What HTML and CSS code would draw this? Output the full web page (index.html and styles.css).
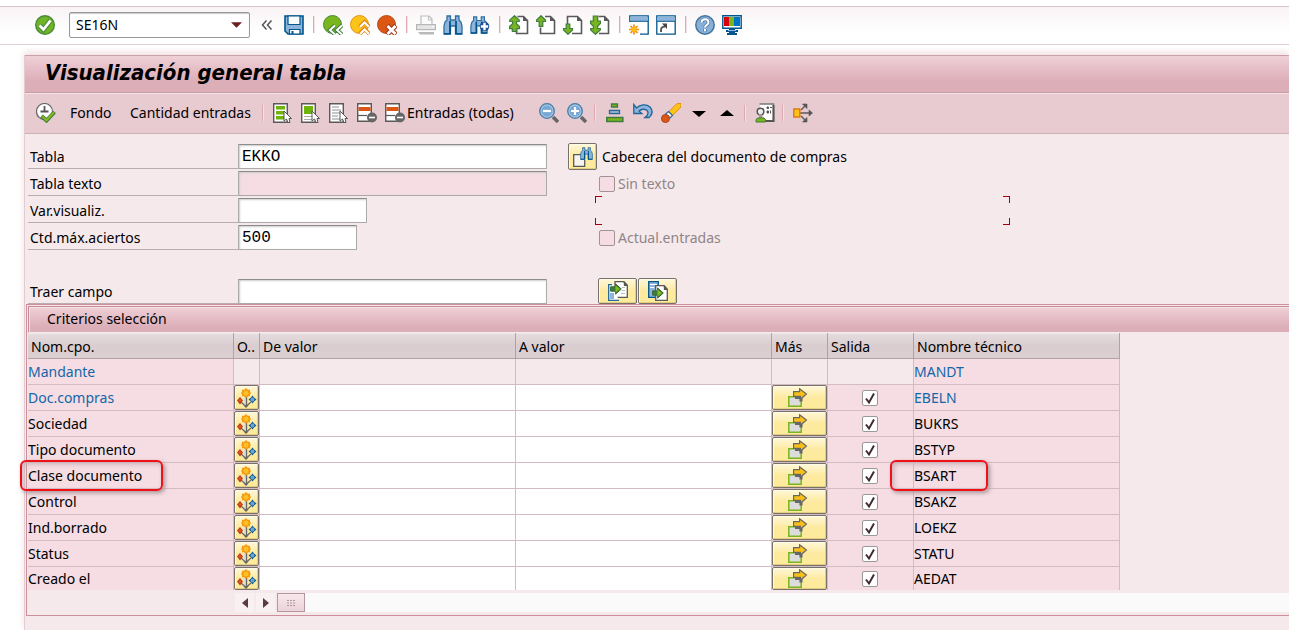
FILE: index.html
```html
<!DOCTYPE html>
<html lang="es">
<head>
<meta charset="utf-8">
<title>Visualización general tabla</title>
<link rel="stylesheet" href="styles.css">
</head>
<body>
<svg class="sprite" aria-hidden="true">
  <symbol id="ok" viewBox="0 0 20 20"><circle cx="10" cy="10" r="9.3" fill="#6fb525" stroke="#4b8a3a" stroke-width="1.4"/><path d="M4.5 10.5l4 4 7-9" fill="none" stroke="#4b8a3a" stroke-width="5"/><path d="M4.500 10.500l4 4 7-9" fill="none" stroke="#fff" stroke-width="2.8"/></symbol>
  <symbol id="save" viewBox="0 0 20 20"><path d="M1 1h18v18H4l-3-3z" fill="#8fb4dc" stroke="#00568c" stroke-width="1.600"/><path d="M4 1h12v8.500H4z" fill="#f8fafc" stroke="#00568c" stroke-width="1.200"/><path d="M5.500 14.500h10.500V19H5.500z" fill="#fff" stroke="#00568c" stroke-width="1.200"/><path d="M7.500 16h2v3h-2z" fill="#00568c"/></symbol>
  <symbol id="back" viewBox="0 0 20 20"><circle cx="9.500" cy="9.500" r="9" fill="#79b51c" stroke="#4b8a3a"/><path d="M12 10.500l-5 4.500 5 4.500M19 10.500l-5 4.500 5 4.500" fill="none" stroke="#3f7c3f" stroke-width="4"/><path d="M12 10.500l-5 4.500 5 4.500M19 10.500l-5 4.500 5 4.500" fill="none" stroke="#fff" stroke-width="2"/></symbol>
  <symbol id="exit" viewBox="0 0 20 20"><circle cx="9.500" cy="9.500" r="9" fill="#fcc419" stroke="#e69217"/><path d="M9.500 12l5-5 5 5M9.500 19l5-5 5 5" fill="none" stroke="#e58a15" stroke-width="4"/><path d="M10 12l4.500-4.500L19 12M10 19l4.500-4.500L19 19" fill="none" stroke="#fff" stroke-width="2"/></symbol>
  <symbol id="cancel" viewBox="0 0 20 20"><circle cx="9.500" cy="9.500" r="9" fill="#dc5614" stroke="#b94a1e"/><path d="M10 10.500l9 9M19 10.500l-9 9" stroke="#a83a1c" stroke-width="5"/><path d="M10.500 11l8 8M18.500 11l-8 8" stroke="#fff" stroke-width="2.800"/></symbol>
  <symbol id="print" viewBox="0 0 20 20"><path d="M5 11V1h8l3 3v7" fill="#fafafa" stroke="#bdbdbd" stroke-width="1.200"/><path d="M12.500 1v4H16" fill="none" stroke="#bdbdbd"/><rect x=".6" y="9.600" width="18.800" height="5" fill="#e5e5e5" stroke="#b7b7b7" stroke-width="1.200"/><path d="M16 11h2v1h-2z" fill="#fff"/><path d="M2 17h16v2.500H4z" fill="#b9b9b9"/></symbol>
  <symbol id="find" viewBox="0 0 20 20"><path d="M4 1h3.500v4h5V1H16v4l2 2 1 4v8h-6.500v-8h-5v8H1v-8l1-4 2-2z" fill="#8fb4dc" stroke="#2c6f9f" stroke-width="1.300"/><path d="M7 6v13M13 6v13" stroke="#00568c" stroke-width="1.800"/><path d="M1 18.800h6.500M12.500 18.800H19" stroke="#00568c" stroke-width="1.600"/></symbol>
  <symbol id="findnext" viewBox="0 0 20 20"><use href="#find" width="18" height="20"/><circle cx="14.500" cy="11.500" r="4.800" fill="#1e4f92"/><path d="M10.800 11.500h7.400M14.500 7.800v7.400" stroke="#fff" stroke-width="2.400"/></symbol>
  <symbol id="first" viewBox="0 0 20 20"><path d="M8.500 1.500h6l4 4v13H7.500v-3" fill="#fff" stroke="#595959" stroke-width="1.600"/><path d="M14 1v5h5z" fill="#595959"/><path d="M5.500.7l4.700 4.200v1.600H7.500v2.200l3 2.800v2.200H7.800v2.600H3.300v-2.600H.6v-2.200l3-2.800V6.500H.8V4.900z" fill="#78b422" stroke="#3f7c3f" stroke-width="1.200"/></symbol>
  <symbol id="prev" viewBox="0 0 20 20"><path d="M9 1.500h5.500l4 4v13h-14v-6" fill="#fff" stroke="#595959" stroke-width="1.600"/><path d="M14 1v5h5z" fill="#595959"/><path d="M5 .7l4.500 4.300v1.500H6.800v4.800H3.200V6.500H.5V5z" fill="#78b422" stroke="#3f7c3f" stroke-width="1.200"/></symbol>
  <symbol id="next" viewBox="0 0 20 20"><path d="M4.500 9V1.500h10l4 4v13H9" fill="#fff" stroke="#595959" stroke-width="1.600"/><path d="M14 1v5h5z" fill="#595959"/><path d="M5 19.300L.5 15v-1.500h2.700V9h3.600v4.500h2.700V15z" fill="#78b422" stroke="#3f7c3f" stroke-width="1.200"/></symbol>
  <symbol id="last" viewBox="0 0 20 20"><path d="M8.500 1.500h6l4 4v13H9" fill="#fff" stroke="#595959" stroke-width="1.600"/><path d="M14 1v5h5z" fill="#595959"/><path d="M5.500 19.300L.7 15v-1.500h2.700v-2.200L.6 8.500V6h2.700V1h4.400v5h2.700v2.500l-2.800 2.800v2.200h2.700V15z" fill="#78b422" stroke="#3f7c3f" stroke-width="1.200"/></symbol>
  <symbol id="newwin" viewBox="0 0 20 20"><path d="M.8 7V.800h18.400v18.400H11" fill="#fff" stroke="#00568c" stroke-width="1.300"/><path d="M1.500 1.500h17V6h-17z" fill="#8fb4dc"/><path d="M1 6.300h18" stroke="#00568c"/><path d="M5 9.500v10M0 14.500h10M1.500 11l7 7M8.500 11l-7 7" stroke="#f28b12" stroke-width="1.700"/><circle cx="5" cy="14.500" r="2.600" fill="#fdb913"/></symbol>
  <symbol id="shortcut" viewBox="0 0 20 20"><path d="M.8.800h18.400v18.400H.800z" fill="#fff" stroke="#00568c" stroke-width="1.300"/><path d="M1.500 1.500h17V6h-17z" fill="#8fb4dc"/><path d="M1 6.300h18" stroke="#00568c"/><path d="M5 17c-.5-4 1-5.500 4-5.500" fill="none" stroke="#555" stroke-width="2"/><path d="M6 8.500h5V14z" fill="#444"/></symbol>
  <symbol id="help" viewBox="0 0 20 20"><circle cx="10" cy="10" r="9.200" fill="#88b0d8" stroke="#44759d" stroke-width="1.500"/><path d="M6.500 7.500c.3-4.300 7-4.300 7 0 0 2.500-3.500 2.300-3.500 5M10 14v2.500" fill="none" stroke="#4c7fab" stroke-width="3.600"/><path d="M6.500 7.500c.3-4.300 7-4.300 7 0 0 2.500-3.500 2.300-3.500 5M10 14v2.200" fill="none" stroke="#fff" stroke-width="2"/></symbol>
  <symbol id="layout" viewBox="0 0 20 20"><path d="M.8.800h18.400v12.400H.800z" fill="#fff" stroke="#00568c" stroke-width="1.400"/><path d="M2 2h5v9H2z" fill="#d8000c"/><path d="M7 2h5v9H7z" fill="#7ab51d"/><path d="M12 2h6v9h-6z" fill="#0073c6"/><path d="M7 13h6v5H7zM5 18h10v2H5zM4 15h12v2H4z" fill="#00568c"/><path d="M6 15h8v1H6z" fill="#8fb4dc"/></symbol>
  <symbol id="exec" viewBox="0 0 20 20"><circle cx="8.500" cy="8.500" r="8" fill="#fff" stroke="#666" stroke-width="1.200"/><path d="M8.500 3v6M4.500 8.500h8" stroke="#555" stroke-width="1.800"/><path d="M5.500 13l5 4.500 8-8.500" fill="none" stroke="#3f7c3f" stroke-width="4"/><path d="M6 13.300l4.500 4 7.500-8" fill="none" stroke="#84ba22" stroke-width="2"/></symbol>
  <symbol id="cursor" viewBox="0 0 9 13"><path d="M1 1v10l2.500-2 1.500 3.500h2L6 8.500h2.500z" fill="#fff" stroke="#555"/></symbol>
  <symbol id="selall" viewBox="0 0 20 20"><path d="M.7.700h13.600v18.600H.700z" fill="#fff" stroke="#595959" stroke-width="1.400"/><path d="M3 3h9v3.500H3zM3 8h9v3.500H3zM3 13h9v3.500H3z" fill="#6fb40d"/><use href="#cursor" x="10" y="7" width="9" height="13"/></symbol>
  <symbol id="selblock" viewBox="0 0 20 20"><path d="M.7.700h13.600v18.600H.700z" fill="#fff" stroke="#595959" stroke-width="1.400"/><path d="M3 3h9v8H3z" fill="#6fb40d"/><path d="M3 13.500h9M3 16.500h9" stroke="#aaa"/><use href="#cursor" x="10" y="7" width="9" height="13"/></symbol>
  <symbol id="selnone" viewBox="0 0 20 20"><path d="M.7.700h13.600v18.600H.700z" fill="#fff" stroke="#595959" stroke-width="1.400"/><path d="M3 4h7M3 7h9M3 10h8M3 13h6M3 16h8" stroke="#b5b5b5" stroke-width="1.400"/><use href="#cursor" x="10" y="7" width="9" height="13"/></symbol>
  <symbol id="delrow" viewBox="0 0 20 20"><path d="M.7.700h13.600v17.600H.700z" fill="#fff" stroke="#595959" stroke-width="1.400"/><path d="M1.500 4h12v4h-12z" fill="#dc5614"/><path d="M1 12.500h9" stroke="#595959" stroke-width="1.200"/><circle cx="15" cy="14.500" r="5" fill="#666"/><path d="M12 14.500h6" stroke="#fff" stroke-width="1.600"/></symbol>
  <symbol id="lens" viewBox="0 0 20 20"><path d="M14 14l5 5" stroke="#666" stroke-width="3.500"/><circle cx="8" cy="8" r="7.300" fill="#a9c8e6" stroke="#447ba4" stroke-width="1.300"/><circle cx="8" cy="8" r="5.500" fill="#78a8d4"/></symbol>
  <symbol id="zoomout" viewBox="0 0 20 20"><use href="#lens"/><path d="M4 8h8" stroke="#fff" stroke-width="2.200"/></symbol>
  <symbol id="zoomin" viewBox="0 0 20 20"><use href="#lens"/><path d="M4 8h8M8 4v8" stroke="#fff" stroke-width="2.200"/></symbol>
  <symbol id="levels" viewBox="0 0 20 20"><path d="M6.500 1h6v3h-6z" fill="#7ab51d" stroke="#3f7c3f" stroke-width="1.300"/><path d="M4.500 7.500h10v3h-10z" fill="#a8c6e4" stroke="#2c6791" stroke-width="1.300"/><path d="M1.800 14.500h16v4h-16z" fill="#7ab51d" stroke="#3f7c3f" stroke-width="1.600"/></symbol>
  <symbol id="undo" viewBox="0 0 20 20"><path d="M.8 1.500v9h8L6 8c3-3 9-2 9 2 0 2-1 3-3 4.500h4c3.500-3 4-7 1-10.500C13 .500 7 1.500 3.500 5z" fill="#8fb4dc" stroke="#1d679b" stroke-width="1.300"/></symbol>
  <symbol id="brush" viewBox="0 0 20 20"><path d="M8 8.500L15.500 1 17 .5h3V4l-8.500 8.500z" fill="#fcc419" stroke="#e59011"/><path d="M7.500 8.500l4 4-2.500 2.500-4.500-4z" fill="#fff" stroke="#25699a" stroke-width="1.200"/><circle cx="4.500" cy="15.500" r="4" fill="#dc5614" stroke="#a9441c"/></symbol>
  <symbol id="down" viewBox="0 0 20 20"><path d="M3 8h14l-7 6z"/></symbol>
  <symbol id="up" viewBox="0 0 20 20"><path d="M3 13h14l-7-6z"/></symbol>
  <symbol id="person" viewBox="0 0 20 20"><path d="M4.500 1h14v17H10" fill="#fff" stroke="#777" stroke-width="1.400"/><path d="M18.500 2v16H10" fill="none" stroke="#555" stroke-width="2"/><path d="M12 4h1.500v1.500H12zM15 4.500h2M12 8h1.500v2H12zM15.500 7.500v3" fill="#555" stroke="#555"/><circle cx="5.500" cy="8.500" r="3.300" fill="#eee" stroke="#555" stroke-width="1.500"/><path d="M4 11h3v4H4z" fill="#999"/><path d="M1 19v-2.500L3 15h6l1.500 1.500V19z" fill="#7ab51d" stroke="#3f7c3f"/></symbol>
  <symbol id="split" viewBox="0 0 20 20"><path d="M7 10h9M8 7l4-4M8 13l4 4" stroke="#595959" stroke-width="1.400"/><path d="M16 7l3.500 3-3.500 3zM9.500 1H14v4.500zM9.500 19H14v-4.500z" fill="#555" stroke="#555" stroke-width=".6"/><path d="M.8 6h6v8h-6z" fill="#fcc419" stroke="#e07c10" stroke-width="1.500"/></symbol>
  <symbol id="findpage" viewBox="0 0 20 20"><path d="M8 7.700H.700v11.600h11V13" fill="#f7f4ef" stroke="#595959" stroke-width="1.300"/><use href="#find" x="7" width="13" height="13"/></symbol>
  <symbol id="arrowrt" viewBox="0 0 12 12"><path d="M.6 3.800h5V.900L11.300 6 5.600 11.100V8.200h-5z" fill="#3f7c3f" stroke="#35693a"/><path d="M5.500 4.500V2.500L10 6l-4.500 3.500v-2z" fill="#84bb20"/></symbol>
  <symbol id="getfield" viewBox="0 0 20 20"><path d="M7 .7h9l3.300 3.500v12.100H7z" fill="#fff" stroke="#595959" stroke-width="1.300"/><path d="M14 6.500h3M14 9.500h3M13 12.500h4" stroke="#bbb"/><path d="M11 19.300H.700V3.700H4" fill="#fff" stroke="#1d679b" stroke-width="1.300"/><path d="M2 12h4v6H2z" fill="#8fb4dc"/><path d="M15.500 0L20 5h-4z" fill="#555"/><use href="#arrowrt" x="2" y="2" width="12" height="12"/></symbol>
  <symbol id="putfield" viewBox="0 0 20 20"><path d="M.7.700h9.600v15.600H.700z" fill="#8fb4dc" stroke="#00568c" stroke-width="1.300"/><path d="M2 3.500h7M2 6.500h4" stroke="#fff" stroke-width="1.200"/><path d="M7.700 19.300V4.700h8.600l3 3.500v11.100z" fill="#fff" stroke="#595959" stroke-width="1.300"/><path d="M15.500 4l4.500 5h-4z" fill="#555"/><use href="#arrowrt" x="4" y="6" width="12" height="12"/></symbol>
  <symbol id="options" viewBox="0 0 20 20"><path d="M9 8v9" stroke="#d9d9d9" stroke-width="3.600"/><path d="M9.500 8v10M9 18.500l-5-4.500M9 18.500l5-4.500" stroke="#666" stroke-width="1.200"/><path d="M6.500 17.500h5L9 20z" fill="#666"/><path d="M9 0l1.800 1.800H13v2L14 5l-1 1.200v2h-2.200L9 10 7.200 8.200H5v-2L4 5l1-1.200v-2h2.200z" fill="#f59a12"/><circle cx="9" cy="5" r="2.500" fill="#fdbf24"/><path d="M3 9l3 3.500-3 4-3-4z" fill="#b93a1d"/><circle cx="3" cy="12.500" r="1.500" fill="#dd5620"/><path d="M15.500 7.500l1.500 2 2.500 2-2.500 2-1.500 2-1.500-2-2.500-2 2.500-2z" fill="#0d5b93"/><circle cx="15.500" cy="11.500" r="1.900" fill="#6ba2d0"/></symbol>
  <symbol id="more" viewBox="0 0 20 20"><path d="M.8 8.800h12.400v9.400H.8z" fill="#dcdcdc" stroke="#7ab51d" stroke-width="1.500"/><path d="M7 9.500h6v4" fill="none" stroke="#666" stroke-width="3"/><path d="M5.600 3.600h6V.8L18.400 6l-6 5.300V8.400H5.600z" fill="#fcc014" stroke="#666" stroke-width="1.200"/></symbol>
</svg>

<header class="system">
  <button class="tool" aria-label="Continuar"><svg><use href="#ok"/></svg></button>
  <div class="command">
    <input aria-label="Comando" value="SE16N">
    <button aria-label="Historial"><svg viewBox="0 0 12 6"><path d="M0 0h12L6 6z" fill="#6b1d20"/></svg></button>
  </div>
  <button class="collapse" aria-label="Ocultar campo"><svg viewBox="0 0 12 10"><path d="M5.500 .500L1.500 5l4 4.500M10.500 .500L6.500 5l4 4.500" fill="none" stroke="#555" stroke-width="1.500"/></svg></button>
  <button class="tool" aria-label="Grabar"><svg><use href="#save"/></svg></button>
  <i class="sep"></i>
  <button class="tool" aria-label="Atrás"><svg><use href="#back"/></svg></button>
  <button class="tool" aria-label="Finalizar"><svg><use href="#exit"/></svg></button>
  <button class="tool" aria-label="Cancelar"><svg><use href="#cancel"/></svg></button>
  <i class="sep"></i>
  <button class="tool" aria-label="Imprimir" disabled><svg><use href="#print"/></svg></button>
  <button class="tool" aria-label="Buscar"><svg><use href="#find"/></svg></button>
  <button class="tool" aria-label="Continuar búsqueda"><svg><use href="#findnext"/></svg></button>
  <i class="sep"></i>
  <button class="tool" aria-label="Primera página"><svg><use href="#first"/></svg></button>
  <button class="tool" aria-label="Página anterior"><svg><use href="#prev"/></svg></button>
  <button class="tool" aria-label="Página siguiente"><svg><use href="#next"/></svg></button>
  <button class="tool" aria-label="Última página"><svg><use href="#last"/></svg></button>
  <i class="sep"></i>
  <button class="tool" aria-label="Crear modo"><svg><use href="#newwin"/></svg></button>
  <button class="tool" aria-label="Crear enlace"><svg><use href="#shortcut"/></svg></button>
  <i class="sep"></i>
  <button class="tool" aria-label="Ayuda"><svg><use href="#help"/></svg></button>
  <button class="tool" aria-label="Ajustar disposición local"><svg><use href="#layout"/></svg></button>
</header>

<main class="window">
  <h1>Visualización general tabla</h1>
  <div class="actions">
    <button class="tool" aria-label="Ejecutar"><svg><use href="#exec"/></svg></button>
    <button class="text short">Fondo</button>
    <button class="text long">Cantidad entradas</button>
    <i class="sep"></i>
    <button class="tool" aria-label="Marcar todo"><svg><use href="#selall"/></svg></button>
    <button class="tool" aria-label="Marcar bloque"><svg><use href="#selblock"/></svg></button>
    <button class="tool" aria-label="Desmarcar todo"><svg><use href="#selnone"/></svg></button>
    <button class="tool" aria-label="Borrar entrada"><svg><use href="#delrow"/></svg></button>
    <button class="text entries"><svg><use href="#delrow"/></svg>Entradas (todas)</button>
    <button class="tool" aria-label="Reducir"><svg><use href="#zoomout"/></svg></button>
    <button class="tool" aria-label="Ampliar"><svg><use href="#zoomin"/></svg></button>
    <i class="sep"></i>
    <button class="tool" aria-label="Niveles"><svg><use href="#levels"/></svg></button>
    <button class="tool" aria-label="Deshacer"><svg><use href="#undo"/></svg></button>
    <button class="tool" aria-label="Formato"><svg><use href="#brush"/></svg></button>
    <button class="tool" aria-label="Bajar"><svg><use href="#down"/></svg></button>
    <button class="tool" aria-label="Subir"><svg><use href="#up"/></svg></button>
    <i class="sep"></i>
    <button class="tool" aria-label="Usuario"><svg><use href="#person"/></svg></button>
    <i class="sep"></i>
    <button class="tool" aria-label="Enlaces"><svg><use href="#split"/></svg></button>
  </div>

  <form class="fields">
    <div class="row">
      <label for="tabla">Tabla</label>
      <div class="slot"><input id="tabla" class="wide" value="EKKO"></div>
      <button type="button" class="gold lookup" aria-label="Buscar tabla"><svg><use href="#findpage"/></svg></button>
      <span class="desc">Cabecera del documento de compras</span>
    </div>
    <div class="row">
      <label for="texto">Tabla texto</label>
      <div class="slot"><input id="texto" class="wide" disabled></div>
      <span class="check"><input type="checkbox" id="sin" disabled><label for="sin">Sin texto</label></span>
    </div>
    <div class="row">
      <label for="var">Var.visualiz.</label>
      <div class="slot"><input id="var" class="variant"></div>
      <div class="frame"></div>
    </div>
    <div class="row">
      <label for="max">Ctd.máx.aciertos</label>
      <div class="slot"><input id="max" class="hits" value="500"></div>
      <span class="check"><input type="checkbox" id="act" disabled><label for="act">Actual.entradas</label></span>
    </div>
    <div class="row fetch">
      <label for="traer">Traer campo</label>
      <div class="slot"><input id="traer" class="wide"></div>
      <div class="pair">
        <button type="button" class="gold" aria-label="Traer"><svg><use href="#getfield"/></svg></button>
        <button type="button" class="gold" aria-label="Pasar"><svg><use href="#putfield"/></svg></button>
      </div>
    </div>
  </form>

  <section class="criteria">
    <h2>Criterios selección</h2>
    <table>
      <colgroup><col class="c-name"><col class="c-opt"><col class="c-val"><col class="c-val"><col class="c-more"><col class="c-out"><col class="c-name"></colgroup>
      <thead><tr><th>Nom.cpo.</th><th>O..</th><th>De valor</th><th>A valor</th><th>Más</th><th>Salida</th><th>Nombre técnico</th></tr></thead>
      <tbody>
        <tr class="key locked"><td>Mandante</td><td></td><td></td><td></td><td></td><td></td><td>MANDT</td></tr>
        <tr class="key"><td>Doc.compras</td><td><button class="gold" aria-label="Opción"><svg><use href="#options"/></svg></button></td><td><input aria-label="De valor"></td><td><input aria-label="A valor"></td><td><button class="gold more" aria-label="Más"><svg><use href="#more"/></svg></button></td><td><input type="checkbox" aria-label="Salida" checked></td><td>EBELN</td></tr>
        <tr><td>Sociedad</td><td><button class="gold" aria-label="Opción"><svg><use href="#options"/></svg></button></td><td><input aria-label="De valor"></td><td><input aria-label="A valor"></td><td><button class="gold more" aria-label="Más"><svg><use href="#more"/></svg></button></td><td><input type="checkbox" aria-label="Salida" checked></td><td>BUKRS</td></tr>
        <tr><td>Tipo documento</td><td><button class="gold" aria-label="Opción"><svg><use href="#options"/></svg></button></td><td><input aria-label="De valor"></td><td><input aria-label="A valor"></td><td><button class="gold more" aria-label="Más"><svg><use href="#more"/></svg></button></td><td><input type="checkbox" aria-label="Salida" checked></td><td>BSTYP</td></tr>
        <tr><td>Clase documento<i class="mark name"></i></td><td><button class="gold" aria-label="Opción"><svg><use href="#options"/></svg></button></td><td><input aria-label="De valor"></td><td><input aria-label="A valor"></td><td><button class="gold more" aria-label="Más"><svg><use href="#more"/></svg></button></td><td><input type="checkbox" aria-label="Salida" checked></td><td>BSART<i class="mark tech"></i></td></tr>
        <tr><td>Control</td><td><button class="gold" aria-label="Opción"><svg><use href="#options"/></svg></button></td><td><input aria-label="De valor"></td><td><input aria-label="A valor"></td><td><button class="gold more" aria-label="Más"><svg><use href="#more"/></svg></button></td><td><input type="checkbox" aria-label="Salida" checked></td><td>BSAKZ</td></tr>
        <tr><td>Ind.borrado</td><td><button class="gold" aria-label="Opción"><svg><use href="#options"/></svg></button></td><td><input aria-label="De valor"></td><td><input aria-label="A valor"></td><td><button class="gold more" aria-label="Más"><svg><use href="#more"/></svg></button></td><td><input type="checkbox" aria-label="Salida" checked></td><td>LOEKZ</td></tr>
        <tr><td>Status</td><td><button class="gold" aria-label="Opción"><svg><use href="#options"/></svg></button></td><td><input aria-label="De valor"></td><td><input aria-label="A valor"></td><td><button class="gold more" aria-label="Más"><svg><use href="#more"/></svg></button></td><td><input type="checkbox" aria-label="Salida" checked></td><td>STATU</td></tr>
        <tr class="final"><td>Creado el</td><td><button class="gold" aria-label="Opción"><svg><use href="#options"/></svg></button></td><td><input aria-label="De valor"></td><td><input aria-label="A valor"></td><td><button class="gold more" aria-label="Más"><svg><use href="#more"/></svg></button></td><td><input type="checkbox" aria-label="Salida" checked></td><td>AEDAT</td></tr>
      </tbody>
    </table>
    <div class="scroll">
      <button class="step" aria-label="Izquierda"><svg viewBox="0 0 6 10"><path d="M6 0v10L0 5z" fill="#5b3a42"/></svg></button>
      <button class="step" aria-label="Derecha"><svg viewBox="0 0 6 10"><path d="M0 0v10l6-5z" fill="#5b3a42"/></svg></button>
      <div class="track"><div class="thumb"><svg viewBox="0 0 8 6"><path d="M0 .5h8M0 3h8M0 5.500h8" stroke="#b0989e" stroke-dasharray="2 1"/></svg></div></div>
    </div>
  </section>
</main>
</body>
</html>
```
FILE: styles.css
```css
* { box-sizing: border-box; }

body {
  margin: 0;
  min-height: 100vh;
  display: flex;
  flex-direction: column;
  background: #fff;
  color: #000;
  font: 14px/20px "Noto Sans", "Open Sans", sans-serif;
  overflow-x: hidden;
}

.sprite { position: absolute; width: 0; height: 0; }
svg { display: block; flex: none; }
button { font: inherit; color: inherit; padding: 0; border: 0; background: none; display: flex; align-items: center; }
input { font: inherit; margin: 0; }

/* System toolbar */
.system {
  display: flex;
  align-items: center;
  gap: 7px;
  height: 39px;
  margin-top: 6px;
  padding: 0 0 2px 35px;
  border-top: 1px solid #d6c6c9;
  border-bottom: 1px solid #e0d0d3;
  background: linear-gradient(#f9f3f4, #fff 70%);
}
.tool, .tool svg { width: 20px; height: 20px; }
.sep { width: 2px; height: 17px; margin: 0 1px 0 2px; background: linear-gradient(90deg, #dfa9b3 50%, #f3e2e5 50%); }
.command {
  display: flex;
  align-items: center;
  width: 181px;
  height: 26px;
  margin: 0 4px 0 7px;
  padding-right: 7px;
  border: 1px solid #999;
  border-radius: 2px;
  background: #fff;
  box-shadow: inset 0 1px 1px #ccc;
}
.command input { flex: 1; min-width: 0; padding: 0 6px; border: 0; background: none; outline: 0; }
.command svg { width: 11px; height: 6px; }
.collapse { margin-right: 4px; }
.collapse svg { width: 12px; height: 10px; }

/* Window */
.window {
  flex: 1;
  margin: 10px 0 0 24px;
  border-left: 1px solid #e2ccd1;
  background: #f6e9eb;
  box-shadow: 0 -3px 7px #f1dfe2;
}
h1 {
  margin: 0;
  height: 38px;
  padding-left: 20px;
  border-top: 1px solid #c9a0a8;
  border-bottom: 1px solid #c49ca4;
  background: linear-gradient(#efd0d7, #dcaeb8 70%, #dcaeb8);
  font: italic bold 22px/34px "DejaVu Sans Condensed", "DejaVu Sans", sans-serif;
}
.actions {
  display: flex;
  align-items: center;
  gap: 8px;
  height: 41px;
  padding: 0 0 1px 11px;
  border-top: 1px solid #f6e4e8;
  border-bottom: 1px solid #cdb0b6;
  background: #e8cad1;
}
.actions .text { height: 22px; white-space: nowrap; }
.actions .sep { margin: 0 1px 0 -1px; height: 16px; }
.actions .short { width: 45px; margin-left: 6px; }
.actions .long { width: 125px; margin-left: 7px; }
.actions .entries { width: 146px; gap: 2px; }
.entries svg { width: 20px; height: 20px; }

/* Form */
.fields { padding: 10px 0 0 3px; }
.row { display: flex; align-items: flex-end; height: 25px; margin-bottom: 2px; white-space: nowrap; }
.row > label { width: 210px; height: 25px; padding-left: 2px; line-height: 25px; border-bottom: 1px solid #b9adaf; }
.slot { width: 330px; }
.slot input {
  display: block;
  height: 25px;
  padding: 0 3px;
  border: 1px solid #aaa;
  border-top-color: #8c8c8c;
  border-radius: 1px;
  background: #fff;
  box-shadow: inset 1px 1px 2px #ccc;
  font: 16px "Liberation Mono", monospace;
}
.slot input:disabled { background: #f5dde3; }
.slot .wide { width: 309px; }
.slot .variant { width: 129px; }
.slot .hits { width: 119px; }
.desc { padding-left: 5px; line-height: 25px; }
.gold {
  justify-content: center;
  border: 1px solid #77716c;
  border-radius: 2px;
  background: linear-gradient(#fff8d9, #fdeaa0 50%, #fdeb9a);
  box-shadow: inset 1px 1px #fffbe6, inset -1px -1px #e4cd83;
}
.gold svg { width: 20px; height: 20px; }
.more { padding-right: 4px; }
.lookup { width: 29px; height: 27px; margin-bottom: -1px; }
.check { display: flex; align-items: center; gap: 3px; height: 25px; margin-left: 31px; color: #8f8588; }
input[type="checkbox"] {
  appearance: none;
  display: block;
  width: 16px;
  height: 16px;
  border: 1px solid #999;
  border-radius: 2px;
  background: #fff;
}
input[type="checkbox"]:disabled { background: #f5dde3; border-color: #a09498; }
.frame {
  width: 415px;
  height: 29px;
  margin: 0 0 -2px 27px;
  --c: linear-gradient(#a00010, #a00010);
  background:
    var(--c) 0 0 / 7px 1px, var(--c) 0 0 / 1px 7px,
    var(--c) 100% 0 / 7px 1px, var(--c) 100% 0 / 1px 7px,
    var(--c) 0 100% / 7px 1px, var(--c) 0 100% / 1px 7px,
    var(--c) 100% 100% / 7px 1px, var(--c) 100% 100% / 1px 7px;
  background-repeat: no-repeat;
}
.fetch { margin: 29px 0 0; }
.pair { display: flex; gap: 1px; margin-left: 30px; }
.pair .gold { width: 39px; height: 26px; }

/* Selection criteria */
.criteria {
  margin-left: 1px;
  padding-left: 1px;
  border: 1px solid #cc8f9b;
  border-right: 0;
}
h2 {
  margin: 1px 0 0;
  height: 27px;
  padding-left: 18px;
  border-top: 1px solid #c68a96;
  border-left: 1px solid #c68a96;
  border-bottom: 1px solid #f6e9eb;
  background: linear-gradient(#efd0d7, #dcaeb8 80%);
  box-shadow: inset 1px 1px #f5e2e6;
  font: inherit;
  line-height: 24px;
}
table { width: 1092px; table-layout: fixed; border-collapse: separate; border-spacing: 0; }
.c-name { width: 206px; }
.c-opt { width: 26px; }
.c-val { width: 256px; }
.c-more { width: 56px; }
.c-out { width: 86px; }
th {
  height: 26px;
  padding: 2px 3px 0;
  border-right: 1px solid #b3a0a4;
  border-bottom: 1px solid #b3a0a4;
  background: linear-gradient(#e6dddf, #dacdd0 50%, #dccfd2);
  box-shadow: inset 0 1px #f1e8ea;
  font-weight: normal;
  text-align: left;
  white-space: nowrap;
}
td {
  position: relative;
  height: 26px;
  padding: 0;
  border-right: 1px solid #d2bcc2;
  border-bottom: 1px solid #d2bcc2;
  background: #f5dde3;
  white-space: nowrap;
}
td:nth-child(3), td:nth-child(4) { background: #fff; }
.locked td:not(:first-child):not(:last-child) { background: #f6e9eb; }
.key { color: #1466a8; }
td .gold { width: 100%; height: 25px; }
td input:not([type]) { display: block; width: 100%; height: 25px; padding: 0 4px; border: 0; background: none; }
td:nth-child(6) { padding-right: 2px; }
td input[type="checkbox"] {
  margin: 0 auto;
  background: url("data:image/svg+xml,%3Csvg xmlns='http://www.w3.org/2000/svg' viewBox='0 0 14 14'%3E%3Cpath d='M3 7.500l3 4 5-9' fill='none' stroke='%23402c30' stroke-width='2'/%3E%3C/svg%3E") #fff;
}
.final td { height: 23px; border-bottom: 0; }
.final .gold, .final td input:not([type]) { height: 23px; }
.mark {
  position: absolute;
  z-index: 1;
  top: -3px;
  left: -8px;
  width: 143px;
  height: 31px;
  border: 2px solid #f01018;
  border-radius: 6px;
  box-shadow: 2px 2px 4px #a9969b, inset 2px 2px 5px #c9b0b6;
}
.mark.tech { left: -24px; width: 98px; }

.scroll { display: flex; gap: 2px; height: 25px; padding: 3px 0 3px 207px; }
.step { width: 19px; justify-content: center; background: #f9f0f2; }
.step svg { width: 6px; height: 10px; }
.track { flex: 1; background: #fbfafa; }
.thumb {
  display: flex;
  align-items: center;
  justify-content: center;
  width: 28px;
  height: 19px;
  border: 1px solid #b5989f;
  background: linear-gradient(#f8e8eb, #ecd3d9);
}
.thumb svg { width: 8px; height: 6px; }
```
